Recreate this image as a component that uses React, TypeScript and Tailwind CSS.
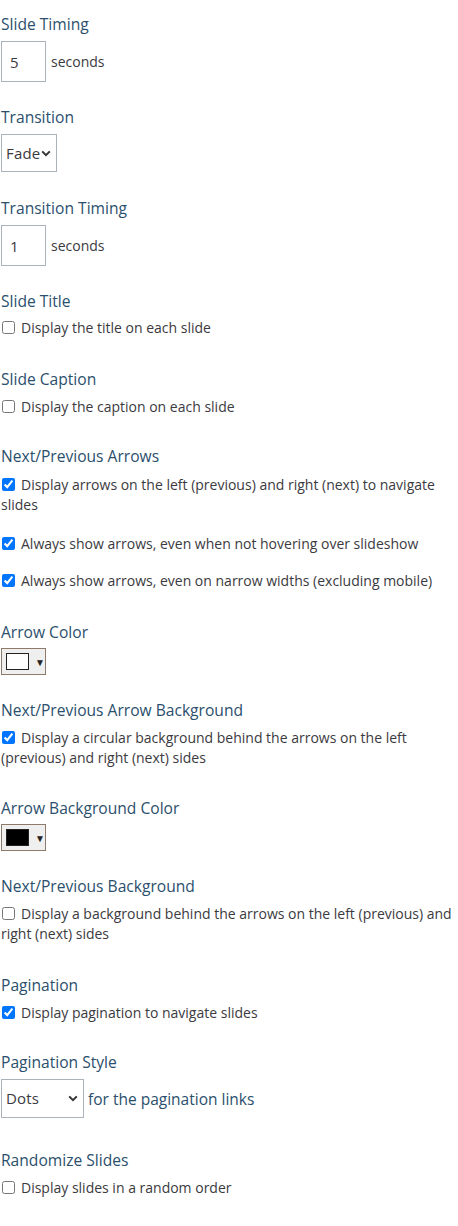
import React from "react";

const HEAD = "text-[15.6px] leading-5 text-[#2b4f6c]";
const BODY = "text-[14px] leading-5 text-[#3b3a40]";

function Heading({ children }: { children: React.ReactNode }) {
  return <div className={HEAD}>{children}</div>;
}

function Check({ checked, children, className = "" }: { checked?: boolean; children: React.ReactNode; className?: string }) {
  return (
    <label className={`block ${BODY} ${className}`}>
      <input
        type="checkbox"
        defaultChecked={checked}
        className="mr-[6px] ml-px h-[13px] w-[13px] align-[-1px]"
      />
      {children}
    </label>
  );
}

function NumberBox({ value }: { value: string }) {
  return (
    <div className="flex items-center gap-[5px]">
      <input
        defaultValue={value}
        className="h-[41px] w-[45px] border border-[#aab3bc] bg-white pl-[8px] text-[15px] text-[#3b3a40] outline-none"
      />
      <span className={BODY}>seconds</span>
    </div>
  );
}

function Chevron() {
  return (
    <svg width="10" height="7" viewBox="0 0 10 7" className="shrink-0">
      <path d="M1.2 1.4 L5 5.2 L8.8 1.4" fill="none" stroke="#333" strokeWidth="2" />
    </svg>
  );
}

function SelectBox({ label, width, height }: { label: string; width: string; height: string }) {
  return (
    <div className={`flex items-center justify-between border border-[#aab3bc] bg-white pl-[4px] pr-[5px] text-[15px] tracking-[0.2px] text-[#3b3a40] ${width} ${height}`}>
      <span>{label}</span>
      <Chevron />
    </div>
  );
}

function ColorButton({ color }: { color: string }) {
  return (
    <div className="flex h-[27px] w-[45px] items-center border border-[#8d7a68] bg-[#efefef] pl-[4px]">
      <div className={`h-[17px] w-[23px] border border-[#222] ${color}`} />
      <span className="ml-[6px] text-[10px] leading-none text-[#222]">▼</span>
    </div>
  );
}

export default function App() {
  return (
    <main
      className="w-[458px] bg-white pl-px pt-[14px] pb-[28px]"
      style={{ fontFamily: '"Open Sans", "Noto Sans", sans-serif' }}
    >
      <Heading>Slide Timing</Heading>
      <div className="mt-[7px]">
        <NumberBox value="5" />
      </div>

      <div className="mt-[25px]">
        <Heading>Transition</Heading>
        <div className="mt-[7px]">
          <SelectBox label="Fade" width="w-[56px]" height="h-[38px]" />
        </div>
      </div>

      <div className="mt-[26px]">
        <Heading>Transition Timing</Heading>
        <div className="mt-[7px]">
          <NumberBox value="1" />
        </div>
      </div>

      <div className="mt-[25px]">
        <Heading>Slide Title</Heading>
        <Check className="mt-[7px]">Display the title on each slide</Check>
      </div>

      <div className="mt-[31px]">
        <Heading>Slide Caption</Heading>
        <Check className="mt-[8px]">Display the caption on each slide</Check>
      </div>

      <div className="mt-[29px]">
        <Heading>Next/Previous Arrows</Heading>
        <Check checked className="mt-[9px]">
          Display arrows on the left (previous) and right (next) to navigate slides
        </Check>
        <Check checked className="mt-[19px]">
          Always show arrows, even when not hovering over slideshow
        </Check>
        <Check checked className="mt-[17px]">
          Always show arrows, even on narrow widths (excluding mobile)
        </Check>
      </div>

      <div className="mt-[31px]">
        <Heading>Arrow Color</Heading>
        <div className="mt-[6px]">
          <ColorButton color="bg-white" />
        </div>
      </div>

      <div className="mt-[25px]">
        <Heading>Next/Previous Arrow Background</Heading>
        <Check checked className="mt-[8px]">
          Display a circular background behind the arrows on the left (previous) and right (next) sides
        </Check>
      </div>

      <div className="mt-[30px]">
        <Heading>Arrow Background Color</Heading>
        <div className="mt-[6px]">
          <ColorButton color="bg-black" />
        </div>
      </div>

      <div className="mt-[25px]">
        <Heading>Next/Previous Background</Heading>
        <Check className="mt-[8px]">
          Display a background behind the arrows on the left (previous) and right (next) sides
        </Check>
      </div>

      <div className="mt-[31px]">
        <Heading>Pagination</Heading>
        <Check checked className="mt-[8px]">Display pagination to navigate slides</Check>
      </div>

      <div className="mt-[29px]">
        <Heading>Pagination Style</Heading>
        <div className="mt-[7px] flex items-center gap-[4px]">
          <SelectBox label="Dots" width="w-[83px]" height="h-[39px]" />
          <span className="text-[15.5px] leading-5 text-[#2b4f6c]">for the pagination links</span>
        </div>
      </div>

      <div className="mt-[32px]">
        <Heading>Randomize Slides</Heading>
        <Check className="mt-[8px]">Display slides in a random order</Check>
      </div>
    </main>
  );
}
